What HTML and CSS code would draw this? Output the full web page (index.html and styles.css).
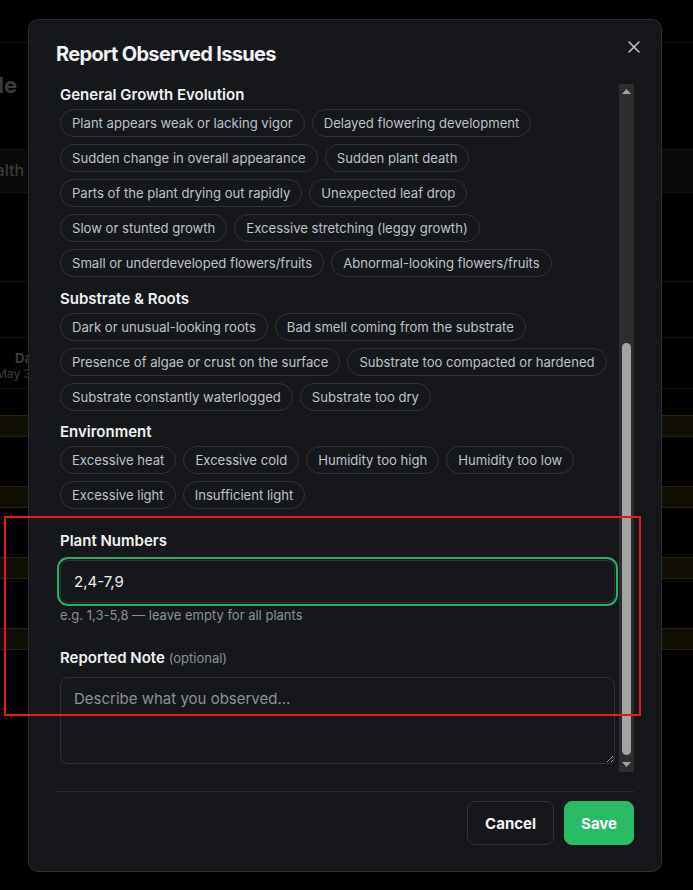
FILE: index.html
```html
<!DOCTYPE html>
<html lang="en">
<head>
    <meta charset="UTF-8">
    <meta name="viewport" content="width=device-width, initial-scale=1.0">
    <title>Report Observed Issues</title>
    <link rel="stylesheet" href="styles.css">
</head>
<body>
    <!-- Page underneath the modal -->
    <div class="page">
        <div class="page-top"></div>
        <div class="page-head">
            <div class="page-title"><h1>Care Schedule</h1></div>
        </div>
        <div class="page-tabs">
            <div class="tab-label">Plant Health</div>
        </div>
        <div class="page-table">
            <div class="table-row"></div>
            <div class="table-head">
                <div class="day-col">
                    <strong>Day 1</strong>
                    <span>May 30</span>
                </div>
            </div>
            <div class="slot"><div class="slot-bar"></div></div>
            <div class="slot"><div class="slot-bar"></div></div>
            <div class="slot"><div class="slot-bar"></div></div>
            <div class="slot"><div class="slot-bar"></div></div>
        </div>
    </div>

    <div class="backdrop">
        <div class="modal">
            <div class="modal-head">
                <h2>Report Observed Issues</h2>
            </div>
            <button class="close-btn" aria-label="Close">
                <svg width="12" height="12" viewBox="0 0 12 12"><path d="M1 1L11 11M11 1L1 11" stroke="currentColor" stroke-width="1.5" stroke-linecap="round"/></svg>
            </button>

            <div class="modal-body">
                <div class="body-scroll">
                    <div class="group">
                        <h4>General Growth Evolution</h4>
                        <div class="chips">
                            <span class="chip">Plant appears weak or lacking vigor</span>
                            <span class="chip">Delayed flowering development</span>
                            <span class="chip">Sudden change in overall appearance</span>
                            <span class="chip">Sudden plant death</span>
                            <span class="chip">Parts of the plant drying out rapidly</span>
                            <span class="chip">Unexpected leaf drop</span>
                            <span class="chip">Slow or stunted growth</span>
                            <span class="chip">Excessive stretching (leggy growth)</span>
                            <span class="chip">Small or underdeveloped flowers/fruits</span>
                            <span class="chip">Abnormal-looking flowers/fruits</span>
                        </div>
                    </div>
                    <div class="group">
                        <h4>Substrate &amp; Roots</h4>
                        <div class="chips">
                            <span class="chip">Dark or unusual-looking roots</span>
                            <span class="chip">Bad smell coming from the substrate</span>
                            <span class="chip">Presence of algae or crust on the surface</span>
                            <span class="chip">Substrate too compacted or hardened</span>
                            <span class="chip">Substrate constantly waterlogged</span>
                            <span class="chip">Substrate too dry</span>
                        </div>
                    </div>
                    <div class="group">
                        <h4>Environment</h4>
                        <div class="chips">
                            <span class="chip">Excessive heat</span>
                            <span class="chip">Excessive cold</span>
                            <span class="chip">Humidity too high</span>
                            <span class="chip">Humidity too low</span>
                            <span class="chip">Excessive light</span>
                            <span class="chip">Insufficient light</span>
                        </div>
                    </div>

                    <div class="field">
                        <label for="plantNumbers">Plant Numbers</label>
                        <input type="text" id="plantNumbers" class="text-input is-focused" value="2,4-7,9">
                        <div class="hint">e.g. 1,3-5,8 — leave empty for all plants</div>
                    </div>

                    <div class="field field-note">
                        <label for="note">Reported Note <span class="optional">(optional)</span></label>
                        <textarea id="note" class="text-area" placeholder="Describe what you observed..."></textarea>
                    </div>
                </div>

                <!-- scrollbar of the body -->
                <div class="scrollbar">
                    <div class="sb-btn">
                        <svg width="9" height="5" viewBox="0 0 9 5"><path d="M4.5 0L9 5H0Z" fill="#a3a3a3"/></svg>
                    </div>
                    <div class="sb-track"><div class="sb-thumb"></div></div>
                    <div class="sb-btn">
                        <svg width="9" height="5" viewBox="0 0 9 5"><path d="M0 0H9L4.5 5Z" fill="#a3a3a3"/></svg>
                    </div>
                </div>
            </div>

            <div class="modal-foot">
                <button class="btn btn-cancel">Cancel</button>
                <button class="btn btn-save">Save</button>
            </div>
        </div>
    </div>

    <div class="annotation"></div>
</body>
</html>
```

FILE: styles.css
```css
* {
    box-sizing: border-box;
}
body {
    margin: 0;
    height: 890px;
    overflow: hidden;
    background: #000;
    font-family: Inter, "Noto Sans", sans-serif;
}

/* page below the modal */
.page {
    color: #cfcfcf;
}
.page-top {
    height: 43px;
    border-bottom: 1px solid #454545;
}
.page-head {
    height: 106px;
    padding-top: 27px;
}
.page-title {
    display: flex;
    justify-content: flex-end;
    width: 17px;
    white-space: nowrap;
}
.page-title h1 {
    margin: 0;
    font-size: 22px;
    line-height: 30px;
    font-weight: 700;
}
.page-tabs {
    height: 44px;
    padding-top: 10px;
    background: #202020;
    border-top: 1px solid #3a3a3a;
    border-bottom: 1px solid #3a3a3a;
    display: flex;
}
.tab-label {
    display: flex;
    justify-content: flex-end;
    width: 24px;
    white-space: nowrap;
    font-size: 16px;
    line-height: 20px;
    font-weight: 500;
}
.page-table {
    margin-top: 88px;
    border-top: 1px solid #454545;
}
.table-row {
    height: 56px;
    border-bottom: 1px solid #454545;
}
.table-head {
    height: 51px;
    border-bottom: 1px solid #454545;
    padding-top: 12px;
}
.day-col {
    width: 60px;
    margin-left: 2px;
    display: flex;
    flex-direction: column;
    align-items: flex-start;
}
.day-col strong {
    margin-left: 13px;
    font-size: 13px;
    line-height: 16px;
}
.day-col span {
    margin-left: -6px;
    font-size: 12px;
    line-height: 16px;
}
.slot {
    height: 71px;
    padding-top: 26px;
}
.slot-bar {
    height: 22px;
    background: #433a12;
    border-top: 1px solid #9c821c;
    border-bottom: 1px solid #9c821c;
}

/* modal */
.backdrop {
    position: fixed;
    inset: 0;
    background: rgba(0, 0, 0, 0.72);
    display: flex;
    align-items: flex-start;
    padding: 19px 0 0 28px;
}
.modal {
    position: relative;
    width: 634px;
    background: #15171b;
    border: 1px solid #2a2d33;
    border-radius: 10px;
    padding: 20px 27px 26px;
    color: #f1f2f4;
}
.modal-head h2 {
    margin: 0 0 16px;
    font-size: 20px;
    line-height: 28px;
    font-weight: 700;
    letter-spacing: -0.033em;
}
.close-btn {
    position: absolute;
    top: 15px;
    right: 15px;
    width: 24px;
    height: 24px;
    padding: 0;
    border: none;
    background: none;
    color: #c2c5cb;
    display: flex;
    align-items: center;
    justify-content: center;
    cursor: pointer;
}
.modal-body {
    display: flex;
    height: 688px;
}
.body-scroll {
    flex: 1;
    overflow: hidden;
    padding: 1px 4px 0;
}
.group {
    margin-bottom: 11.5px;
}
.group h4 {
    margin: 0 0 4px;
    font-size: 15px;
    line-height: 20px;
    font-weight: 600;
}
.chips {
    display: flex;
    flex-wrap: wrap;
    gap: 7px;
}
.chip {
    display: inline-block;
    padding: 4px 11px;
    font-size: 13.1px;
    line-height: 18px;
    color: #bfc3ca;
    border: 1px solid #30333a;
    border-radius: 999px;
    white-space: nowrap;
}
.field {
    margin-top: 22px;
}
.field-note {
    margin-top: 24px;
}
.field label {
    display: block;
    margin-bottom: 9px;
    font-size: 15px;
    line-height: 20px;
    font-weight: 600;
}
.optional {
    font-size: 13px;
    font-weight: 400;
    color: #8c9199;
}
.text-input,
.text-area {
    display: block;
    width: 100%;
    background: #15171b;
    border: 1px solid #2e3138;
    border-radius: 8px;
    padding: 10px 13px;
    font-family: inherit;
    font-size: 15px;
    line-height: 21px;
    color: #eceef1;
    outline: none;
    color-scheme: dark;
}
.text-input.is-focused {
    box-shadow: 0 0 0 1px #15171b, 0 0 0 3px #27b062;
}
.text-area {
    height: 87px;
    resize: vertical;
}
.text-area::placeholder {
    color: #8c9199;
}
.hint {
    margin-top: 3px;
    font-size: 13px;
    line-height: 18px;
    color: #8c9199;
}

/* scrollbar */
.scrollbar {
    width: 15px;
    display: flex;
    flex-direction: column;
    background: #2d2d2e;
}
.sb-btn {
    height: 15px;
    display: flex;
    align-items: center;
    justify-content: center;
}
.sb-track {
    flex: 1;
    padding: 244px 3px 0;
}
.sb-thumb {
    height: 412px;
    background: #a3a3a3;
    border-radius: 5px;
}

.modal-foot {
    margin-top: 19px;
    border-top: 1px solid #272a30;
    padding-top: 9px;
    display: flex;
    justify-content: flex-end;
    gap: 10px;
}
.btn {
    height: 44px;
    padding: 0 17px;
    border-radius: 8px;
    font-family: inherit;
    font-size: 15px;
    font-weight: 700;
    cursor: pointer;
}
.btn-cancel {
    background: #15171b;
    border: 1px solid #30333a;
    color: #f1f2f4;
}
.btn-save {
    background: #2abb67;
    border: 1px solid #2abb67;
    color: #fff;
    padding: 0 16px;
}

/* red highlight drawn over the screenshot */
.annotation {
    position: fixed;
    left: 4px;
    top: 516px;
    width: 637px;
    height: 200px;
    border: 2px solid #e21d1d;
    pointer-events: none;
}
```
